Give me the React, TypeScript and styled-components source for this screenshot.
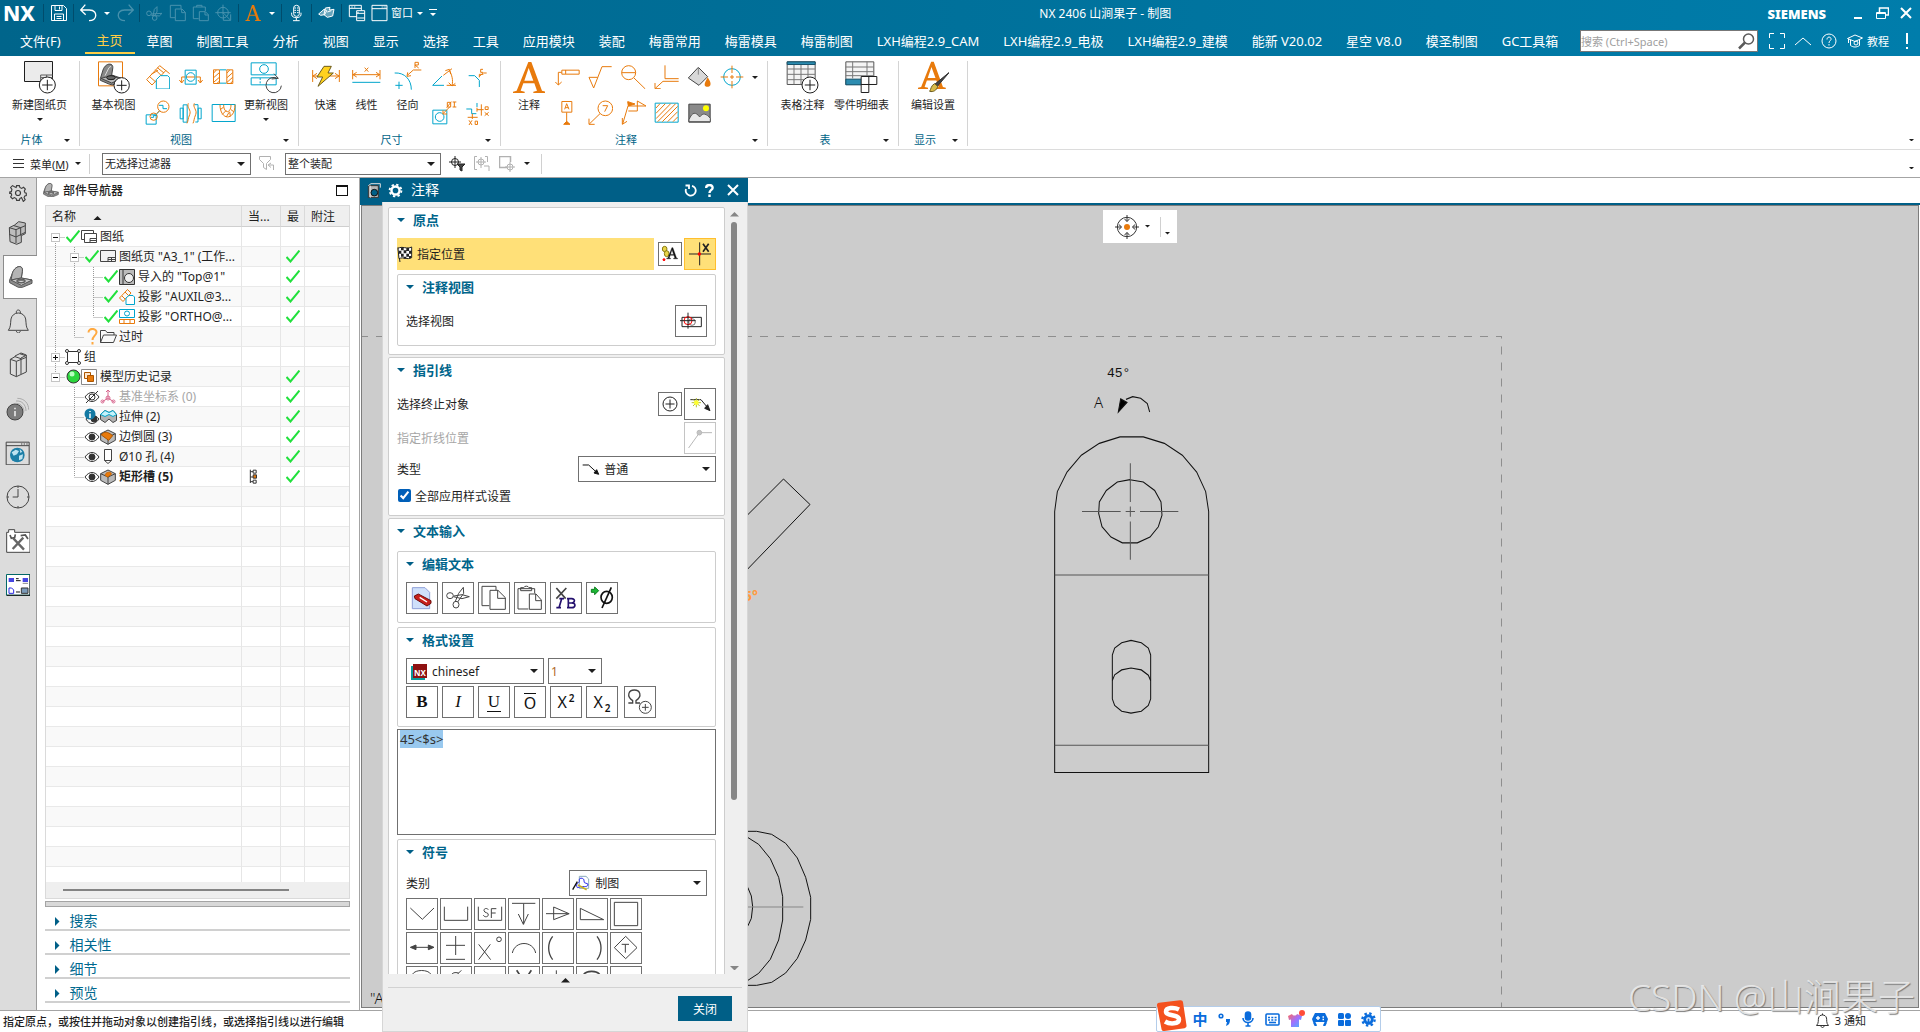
import React, { useEffect, useRef } from "react";
import styled, { createGlobalStyle } from "styled-components";

const O = "#e87a0c";
const C = "#00a5cc";
const BLUE = "#005f87";
const INK = "#1e1e1e";
const GREY = "#5a5a5a";

const Global = createGlobalStyle`
  *, *::before, *::after { box-sizing: border-box; }
  html, body { margin: 0; height: 100%; overflow: hidden; }
  body { font-family: "Noto Sans", "Noto Sans CJK SC", sans-serif; font-size: 12px; color: ${INK}; background: #fff; }
  button, select, input, textarea { font: inherit; color: inherit; margin: 0; }
  button { padding: 0; border: 0; background: none; }
  svg { display: block; flex: none; }
`;

/* ---------- drawing helpers ---------- */

type ZProps = { b: string; s?: string; f?: string; w?: number; children: React.ReactNode };
/* Icons are drawn on a grid three times finer than their size on screen. */
const Z = ({ b, s = INK, f = "none", w = 3, children }: ZProps) => {
  const [, , bw, bh] = b.split(" ").map(Number);
  return (
    <svg viewBox={b} width={bw / 3} height={bh / 3} fill={f} stroke={s} strokeWidth={w} aria-hidden="true">
      {children}
    </svg>
  );
};

const Tri = ({ color = INK, dir = "down", size = 7 }: { color?: string; dir?: "down" | "up" | "right"; size?: number }) => {
  const d = { down: "M0 0h8L4 4z", up: "M0 4h8L4 0z", right: "M0 0v8L4 4z" }[dir];
  const right = dir === "right";
  return (
    <svg viewBox={right ? "0 0 4 8" : "0 0 8 4"} width={right ? size / 2 : size} height={right ? size : size / 2} fill={color} aria-hidden="true">
      <path d={d} />
    </svg>
  );
};

const Part = ({ size }: { size: number }) => (
  <svg viewBox="0 0 72 66" width={size} height={(size * 66) / 72} stroke="#555" strokeWidth="3" aria-hidden="true">
    <path d="M2 42 10 22C14 8 26 0 34 2c6 2 7 8 6 14l-3 20 32 6v10L40 64H28L2 50z" fill="#8c8c8c" />
    <path d="M10 22C14 8 26 0 34 2c6 2 7 8 6 14l-3 20-31 6z" fill="#b4b4b4" />
    <path d="M6 42 37 36l32 6-32 16z" fill="#cacaca" />
    <ellipse cx="36" cy="45" rx="13" ry="6" fill="#777" />
    <path d="M28 48c4-4 12-4 17 0" fill="#ddd" stroke="none" />
  </svg>
);

const Plus = ({ x, y, r = 24 }: { x: number; y: number; r?: number }) => (
  <g stroke={INK} strokeWidth="3">
    <circle cx={x} cy={y} r={r} fill="#fff" />
    <path d={`M${x - r * 0.65} ${y}h${r * 1.3}M${x} ${y - r * 0.65}v${r * 1.3}`} />
  </g>
);

/* ---------- header ---------- */

const Shell = styled.div`height: 100vh; display: flex; flex-direction: column; position: relative; overflow: hidden;`;
const Header = styled.header`background: linear-gradient(90deg, #00658b, #007dab); color: #fff;`;
const TitleBar = styled.div`height: 26px; display: flex; align-items: center; padding-right: 2px;`;
const Logo = styled.span`width: 40px; padding-left: 3px; font: 800 21px/26px "Noto Sans", sans-serif;`;
const QuickSep = styled.span`width: 1px; height: 18px; margin: 0 3px; background: #004c6c;`;
const QuickButton = styled.button<{ $dim?: boolean }>`
  width: 23px; height: 24px; display: flex; align-items: center; justify-content: center; color: #fff; opacity: ${p => (p.$dim ? 0.28 : 1)};
`;
const QuickCaret = styled.button`width: 13px; height: 24px; display: flex; align-items: center; justify-content: center;`;
const QuickText = styled.span`font-size: 11px; line-height: 24px;`;
const Title = styled.h1`flex: 1; margin: 0; padding-left: 4px; text-align: center; font-size: 12px; font-weight: 400;`;
const Brand = styled.span`font: 900 13px/26px "Noto Sans", sans-serif; margin-right: 20px; padding-top: 2px;`;
const WinButton = styled.button`width: 24px; height: 26px; display: flex; align-items: center; justify-content: center;`;

const MenuBar = styled.nav`height: 30px; display: flex; align-items: stretch;`;
const Tab = styled.button<{ $active?: boolean; $file?: boolean }>`
  padding: ${p => (p.$file ? "0 24px 0 20px" : "0 12px")}; font-size: 13px; line-height: 28px; white-space: nowrap; position: relative;
  color: ${p => (p.$active ? "#ffcd45" : "#fff")};
  ${p => p.$active && `border-bottom: 2px solid #ffcd45; margin-bottom: 2px;`}
`;
const MenuRight = styled.div`margin-left: auto; display: flex; align-items: center;`;
const SearchBox = styled.label`
  width: 178px; height: 22px; margin-right: 6px; display: flex; align-items: center; background: #fff; border: 1px solid #777; padding-right: 2px;
  input { flex: 1; min-width: 0; border: 0; padding: 0; outline: 0; font-size: 11px; background: none; }
  input::placeholder { color: #a0a0a0; }
`;
const MenuIcon = styled.button`width: 26px; height: 26px; display: flex; align-items: center; justify-content: center; color: #fff;`;
const Tutorial = styled.button`display: flex; align-items: center; gap: 4px; padding: 0 5px; color: #fff; font-size: 11px;`;

const tabs = ["主页", "草图", "制图工具", "分析", "视图", "显示", "选择", "工具", "应用模块", "装配", "梅雷常用", "梅雷模具", "梅雷制图",
  "LXH编程2.9_CAM", "LXH编程2.9_电极", "LXH编程2.9_建模", "能新 V20.02", "星空 V8.0", "模圣制图", "GC工具箱"];

const TopHeader = () => (
  <Header>
    <TitleBar>
      <Logo>NX</Logo>
      <QuickSep />
      <QuickButton aria-label="保存">
        <svg viewBox="0 0 16 16" width="16" height="16" fill="none" stroke="#fff"><path d="M.5.5h12l3 3v12H.5zM4 .5v5h7v-5M8.500 1.500v3M3.500 15v-6h9v6M5.500 11.500h5M5.500 13.500h5" /></svg>
      </QuickButton>
      <QuickSep />
      <QuickButton aria-label="撤消"><Z b="0 12 54 54" s="#fff" w={4}><path d="M16 14 2 30l15 14M2 30h26c16 0 20 10 19 18s-8 14-20 14" /></Z></QuickButton>
      <QuickCaret aria-label="撤消列表"><Tri color="#fff" size={6} /></QuickCaret>
      <QuickButton $dim aria-label="重做"><Z b="110 12 54 54" s="#fff" w={4}><path d="m148 14 14 16-15 14m15-14h-26c-16 0-20 10-19 18s8 14 20 14" /></Z></QuickButton>
      <QuickSep />
      <QuickButton $dim aria-label="剪切"><Z b="200 12 50 54" s="#fff"><circle cx="209" cy="40" r="7" /><circle cx="226" cy="54" r="7" /><path d="M216 42l32-2-8 8-24-2M221 48l4-20 8-8v16l-8 12" /></Z></QuickButton>
      <QuickButton $dim aria-label="复制"><Z b="268 12 52 54" s="#fff"><path d="M286 53h-14V16h32v10M287 27h20l10 10v25h-30zM306 27v11h11" /></Z></QuickButton>
      <QuickButton $dim aria-label="粘贴"><Z b="336 12 52 54" s="#fff"><path d="M356 56h-16V21h36v12M350 21v-5h16v5M358 35h18l9 9v18h-27zM375 35v10h10" /></Z></QuickButton>
      <QuickButton $dim aria-label="移动"><Z b="408 12 52 54" s="#fff"><circle cx="432" cy="38" r="16" /><path d="M409 38h46M432 14v30M432 38l22 22M433 45v16h22V43" /></Z></QuickButton>
      <QuickSep />
      <QuickButton aria-label="注释"><Z b="495 12 50 54" s="none" f={O}><path fillRule="evenodd" d="M516 15h6l16 44 5 2v2h-18v-2l5-2-4-12h-17l-4 12 5 2v2h-14v-2l5-2zM510 44h15l-8-21z" /></Z></QuickButton>
      <QuickCaret aria-label="注释列表"><Tri color="#fff" size={6} /></QuickCaret>
      <QuickSep />
      <QuickButton aria-label="语音"><Z b="633 12 34 54" s="#fff"><rect x="641" y="16" width="17" height="33" rx="8" /><path d="M635 38v6c0 12 28 12 28 0v-6M649 53v9M639 62h20" /><path d="M643 24h5M643 31h5M643 38h5M651 24h5M651 31h5M651 38h5" /></Z></QuickButton>
      <QuickSep />
      <QuickButton aria-label="命令"><Z b="712 12 52 54" s="#fff"><path d="M714 42l16-14 8 4-6 12-12 2zM734 24l14-2-2 8 14-2-4 20-16 4-10-8zM740 36l12-4" fill="#ffffff66" /></Z></QuickButton>
      <QuickSep />
      <QuickButton aria-label="切换窗口"><Z b="798 12 54 54" s="#fff"><path d="M824 50h-22V16h36v16M802 25h36M824 32h24v30h-24zM824 40h24M826 54h22" /><path d="M808 21h4M816 21h4M826 37h4" /></Z></QuickButton>
      <QuickButton aria-label="窗口"><Z b="868 12 52 54" s="#fff"><path d="M871 16h45v46h-45zM871 26h45" /><path d="M900 21h3M906 21h3M911 21h3" /></Z></QuickButton>
      <QuickText>窗口</QuickText>
      <QuickCaret aria-label="窗口列表"><Tri color="#fff" size={6} /></QuickCaret>
      <QuickCaret aria-label="自定义"><svg viewBox="0 0 8 8" width="8" height="8" fill="#fff"><path d="M0 0h8v1H0zM1 4h6L4 7z" /></svg></QuickCaret>
      <Title>NX 2406 山涧果子 - 制图</Title>
      <Brand>SIEMENS</Brand>
      <WinButton aria-label="最小化"><svg width="8" height="14"><path d="M0 11h8v2H0z" fill="#fff" /></svg></WinButton>
      <WinButton aria-label="还原"><svg width="13" height="13" fill="none" stroke="#fff"><path d="M3.500 5V1h9v7H10" strokeWidth="1.500" /><path d="M.5 5.500h9v6h-9zM.5 6.500h9" /></svg></WinButton>
      <WinButton aria-label="关闭"><svg width="12" height="12" stroke="#fff" strokeWidth="2"><path d="m1 1 10 10M11 1 1 11" /></svg></WinButton>
    </TitleBar>
    <MenuBar>
      <Tab $file>文件(F)</Tab>
      {tabs.map((t, i) => <Tab key={t} $active={i === 0}>{t}</Tab>)}
      <MenuRight>
        <SearchBox>
          <input aria-label="搜索" placeholder="搜索 (Ctrl+Space)" />
          <svg width="17" height="17" fill="none" stroke={GREY}><circle cx="10.500" cy="6" r="5" strokeWidth="1.500" /><path d="m7 9.500-6 6" strokeWidth="2.500" /></svg>
        </SearchBox>
        <MenuIcon aria-label="全屏"><svg width="16" height="16" fill="none" stroke="#fff"><path d="M5 .5H.5V5M11 .5h4.500V5M5 15.500H.5V11M11 15.500h4.500V11" /></svg></MenuIcon>
        <MenuIcon aria-label="最小化功能区"><svg width="16" height="9" fill="none" stroke="#fff"><path d="m0 8 8-7 8 7" /></svg></MenuIcon>
        <MenuIcon aria-label="帮助"><svg width="16" height="16" fill="none" stroke="#fff"><circle cx="8" cy="8" r="7" /><path d="M6 6.500C6 3 10.500 3.500 10 6.500c-.2 1-2 1.500-2 3.500M8 11v1.500" /></svg></MenuIcon>
        <Tutorial>
          <svg width="16" height="14" fill="none" stroke="#fff"><path d="M.5 4.500 8 1l7.500 3L8 7.500zM3.500 6v5.500c3 2 6 2 9 0V6M1.500 5v4" /><circle cx="9" cy="9" r="2" /></svg>
          <span>教程</span>
        </Tutorial>
        <MenuIcon aria-label="提示"><svg width="2" height="16" fill="#fff"><path d="M0 0h2v11H0zM0 14h2v2H0z" /></svg></MenuIcon>
      </MenuRight>
    </MenuBar>
  </Header>
);

/* ---------- ribbon ---------- */

const Ribbon = styled.div`height: 94px; display: flex; align-items: flex-start; padding-top: 5px; border-bottom: 1px solid #dcdcdc; position: relative;`;
const Group = styled.section`height: 85px; display: flex; flex-direction: column; border-right: 1px solid #d4d4d4; padding: 0 6px;`;
const Tools = styled.div`flex: 1; display: flex; align-items: flex-start;`;
const Big = styled.button<{ $w: number }>`
  width: ${p => p.$w}px; display: flex; flex-direction: column; align-items: center; font-size: 11px; line-height: 16px; white-space: nowrap;
  > span:first-child { height: 36px; }
  > svg { margin-top: 5px; }
`;
const Smalls = styled.div`display: grid; grid-auto-flow: column; grid-template-rows: 32px 40px; grid-auto-columns: 33px;`;
const Small = styled.button`display: flex; align-items: center; justify-content: center;`;
const GroupFoot = styled.div`display: flex; align-items: center; font-size: 11px; line-height: 12px; color: #006487; > span { flex: 1; text-align: center; padding-right: 4px; } > button { width: 12px; height: 12px; display: flex; align-items: center; justify-content: center; }`;
const Spacer = styled.span<{ $w: number }>`width: ${p => p.$w}px;`;
const Collapse = styled.button`margin-left: auto; align-self: flex-end; width: 18px; height: 18px; display: flex; align-items: center; justify-content: center;`;
const QuickRow = styled.button`width: 12px; height: 32px; display: flex; align-items: center; justify-content: center;`;

const BigTool = ({ label, w, caret, children }: { label: string; w: number; caret?: boolean; children: React.ReactNode }) => (
  <Big $w={w}><span>{children}</span><span>{label}</span>{caret && <Tri size={6} />}</Big>
);
const Foot = ({ name }: { name: string }) => (
  <GroupFoot><span>{name}</span><button aria-label={`${name}选项`}><Tri size={6} /></button></GroupFoot>
);

const LetterA = "M46 0h9l32 86 10 3v4H61v-4l11-3-8-22H31l-8 22 12 3v4H0v-4l11-3z M34 56h27L47 18z";

const RibbonBar = () => (
  <Ribbon>
    <Group>
      <Tools>
        <BigTool label="新建图纸页" w={67} caret>
          <Z b="0 0 96 99">
            <path d="M1.500 1.500h84v60h-84z" fill="#ebebeb" /><path d="M50 60V42h36M50 50h36M68 42v18" stroke={GREY} /><Plus x={70} y={72} />
          </Z>
        </BigTool>
      </Tools>
      <Foot name="片体" />
    </Group>
    <Group>
      <Tools>
        <BigTool label="基本视图" w={55}>
          <Z b="51 182 96 99">
            <path d="M52.500 184.500h72v72h-72z" stroke={O} />
            <path d="M58 235l8-26c4-12 14-20 24-17 6 3 6 8 5 14l-3 18 30 10v8l-28 12-8-2-28-12z" fill="#888" stroke="#444" /><path d="M60 234l32-8 28 10-28 12z" fill="#bbb" stroke="#444" /><ellipse cx="90" cy="232" rx="13" ry="6" fill="#666" /><path d="M72 226l12-24 6-4" stroke="#ddd" />
            <Plus x={122} y={255} r={23} />
          </Z>
        </BigTool>
        <Smalls>
          <Small aria-label="投影视图"><Z b="192 194 72 74" s={O}><path d="m194 238 39-42 30 24M194 238l16 16 42-44M202 228l18 16M220 208l22 22M208 222l20-12M226 202l20 16" /><path d="M223 266v-28l12-12h22l6 6v34z" stroke={C} fill="#fff" /></Z></Small>
          <Small aria-label="局部放大图"><Z b="190 298 76 76" s={O}><path d="M193.500 342.500h30v28h-30z" stroke={C} /><circle cx="245" cy="318" r="17" /><circle cx="216" cy="348" r="11" /><path d="m225 340 9-10M232 314h12v10h12M208 350h8v-6h10" stroke={C} /><path d="m226 338 8-8" /></Z></Small>
          <Small aria-label="剖视图"><Z b="292 205 72 50" s={O}><path d="M310.500 208.500h33v42h-33z" stroke={C} /><circle cx="327" cy="229" r="13" stroke={C} /><path d="M315 229h24M300 246v-17h10M343 229h13v17M293 238l7 9 7-9M349 238l7 9 7-9" /></Z></Small>
          <Small aria-label="断开视图"><Z b="292 300 70 68" s={C}><path d="M295.500 318.500h9v32h-9zM304.500 308.500h12v52h-12zM349.500 318.500h9v32h-9zM338 308h11v52h-8" /><path d="M320 304c-6 12 10 20 4 34s-4 18-8 26M338 304c-6 12 10 20 4 34s-4 18-8 26" stroke={O} /></Z></Small>
          <Small aria-label="剖切线"><Z b="396 206 62 46" s={O}><path d="M397.500 208.500h18v41h-18zM437.500 208.500h18v41h-18zM398 218l8 -9M398 232l17-15M398 246l17-15M408 249l8-7M438 218l8-9M438 232l17-15M438 246l17-15M448 249l8-7" /><path d="M416 248.500h20M416 208.500h20" stroke={C} /></Z></Small>
          <Small aria-label="局部剖视图"><Z b="388 306 76 60" s={C}><path d="M391.500 310.500h69v51h-69z" /><path d="M415 311c0 48 45 50 45 0M426 311c0 28 22 28 22 0M416 326l10-8M422 340l12-12M434 348l8-14M446 346l-2-14M456 332l-8-6" stroke={O} /></Z></Small>
        </Smalls>
        <BigTool label="更新视图" w={52} caret>
          <Z b="508 182 96 99">
            <path d="M511.500 187.500h75v36h-75zM511.500 232.500h75v21h-75z" stroke={C} fill="#fff" /><circle cx="550" cy="206" r="13" stroke={C} /><path d="M538.500 233v21" stroke={C} strokeDasharray="6 4" />
            <path d="M590 234a23 23 0 1 0 12 22" stroke="#444" fill="none" /><path d="M580 220l13 14-20 2" stroke="#444" />
          </Z>
        </BigTool>
      </Tools>
      <Foot name="视图" />
    </Group>
    <Group>
      <Tools>
        <BigTool label="快速" w={41}><Z b="696 190 84 91"><path d="M698 217v36M778 217v36M698 235h80M711 227l-12 8 12 8M765 227l12 8-12 8" stroke={O} /><path d="M732 206h22l-10 20h16l-46 40 14-28h-17z" fill="#ffd21e" stroke="#6b5a1c" /></Z></BigTool>
        <BigTool label="线性" w={41}><Z b="818 190 86 91"><path d="M820 217v28M902 217v28M820 231h82M832 224l-11 7 11 7M890 224l11 7-11 7M856 210l11 12M867 210l-11 12" stroke={O} /><path d="M819 254h84" stroke={C} /></Z></BigTool>
        <BigTool label="径向" w={41}><Z b="934 190 84 91" s={O}><path d="M936 226c30-2 50 20 50 50M949 252v22M938 263h22" stroke={C} /><path d="M1016 217h-24l-18 16M985 234l-12 2 2-12M997 211v-17h10v8h-10l11 9" /></Z></BigTool>
        <Smalls>
          <Small aria-label="角度"><Z b="1060 198 76 66" s={O}><path d="M1090 228l-28 28h34" stroke={C} /><path d="M1094 226l26-20M1112 210c8 16 12 30 8 48M1100 212l12-4 4 14M1110 248l10 10 10-8M1104 256h28" /></Z></Small>
          <Small aria-label="孔"><Z b="1058 302 76 70" s={O}><path d="M1060.500 329.500h42v41h-42z" stroke={C} /><circle cx="1081" cy="350" r="13" stroke={C} /><path d="m1091 340 20-20M1091 330v11h12M1104 306h10v14h-10zM1102 322l14-18M1120 305h11M1120 320h11M1125 305v15" /></Z></Small>
          <Small aria-label="倒斜角"><Z b="1160 204 58 60" s={O}><path d="M1162 230h18l14 14v20" stroke={C} /><path d="M1194 232l12-10h10M1205 211h-7v9h7M1206 226h-12v9" /></Z></Small>
          <Small aria-label="坐标"><Z b="1158 300 76 74" s={O}><path d="M1162 324h16v14h14M1194 318v-12" stroke={C} /><path d="M1166 349h30M1180 338v16M1194 320v12M1194 326h20M1207 310v34M1170 358l9 14M1179 358l-9 14M1188.500 360.500h7v10h-7zM1218.500 317.500h9v8h-9zM1217 334l12 10M1229 334l-12 10" /></Z></Small>
        </Smalls>
      </Tools>
      <Foot name="尺寸" />
    </Group>
    <Group>
      <Tools>
        <BigTool label="注释" w={44}><Z b="0 -3 98 99" s="none" f={O}><path fillRule="evenodd" d={LetterA} /></Z></BigTool>
        <Smalls>
          <Small aria-label="特征控制框"><Z b="161 34 76 58" s={O}><path d="M181.500 43.500h52v12h-52zM193 43v12M181 50h-10v38M162 79l9 9 10-9" /></Z></Small>
          <Small aria-label="基准特征"><Z b="161 130 76 76" s={O}><path d="M181.500 134.500h30v32h-30zM196 167v36" /><path d="M187 203l9-9 10 9z" fill={O} /><path d="M190 158l6-17 7 17M192 153h9" /></Z></Small>
          <Small aria-label="表面粗糙度"><Z b="259 26 74 72" s={O}><path d="M262 63h26M262 63l14 32 25-64h29" /></Z></Small>
          <Small aria-label="符号标注"><Z b="259 130 76 76" s={O}><circle cx="311" cy="155" r="22" /><path d="m295 171-32 31M262 186v17h17M303 147h15l-9 18" /></Z></Small>
          <Small aria-label="目标点"><Z b="359 26 74 74" s={O}><circle cx="382" cy="49" r="21" /><path d="M361 49h42M398 65l34 33" /></Z></Small>
          <Small aria-label="焊接符号"><Z b="357 130 78 76" s={O}><path d="M362 202l16-54h54l-26-15v30h-27M361 184v19l14-9M380 148v-13" /><path d="M377 135l22 7-20 6z" fill={O} /></Z></Small>
          <Small aria-label="相交符号"><Z b="457 26 76 74" s={O}><path d="M490 27v40h41M531 75h-47l-23 21M460 80v17h17" /></Z></Small>
          <Small aria-label="剖面线"><Z b="457 136 76 64" s={O}><path d="M460.500 139.500h69v57h-69z" stroke={C} /><path d="M463 154l12-13M463 170l28-29M463 186l44-45M468 195l54-54M482 195l46-46M498 195l30-30M514 195l14-14" /></Z></Small>
          <Small aria-label="区域填充"><Z b="556 30 76 66"><path d="m560 66 30-32 28 28-26 26z" fill="#d8d8d8" stroke="#444" /><path d="M590 34v22" stroke="#888" /><path d="M618 64c8 12 10 18 8 24-4 6-14 6-17 0-1-6 3-12 9-24z" fill={O} stroke="none" /></Z></Small>
          <Small aria-label="图像"><Z b="560 138 70 62"><path d="M562.500 141.500h64v54h-64z" fill="#8a8a8a" stroke="#444" /><path d="M563 188c10-24 20-24 32-8 10-14 20-10 32 4v10h-64z" fill="#e8e8e8" stroke="#555" /><circle cx="614" cy="154" r="9" fill="#ff0" stroke="none" /></Z></Small>
          <Small aria-label="中心标记"><Z b="655 26 76 74" s={C}><circle cx="691" cy="62" r="25" /><path d="M657 62h22M685 62h12M703 62h22M691 28v22M691 56v12M691 74v22" stroke={O} /></Z></Small>
          <Spacer $w={1} />
        </Smalls>
        <QuickRow aria-label="更多符号"><Tri size={6} /></QuickRow>
      </Tools>
      <Foot name="注释" />
    </Group>
    <Group>
      <Tools>
        <BigTool label="表格注释" w={57}><Z b="860 14 98 99"><path d="M863.500 16.500h84v68h-84z" fill="#f4f4f4" stroke="#555" /><path d="M863 38h84M863 54h84M863 70h84M884 24v60M905 24v60M926 24v60" stroke="#777" /><path d="M863.500 16.500h84v8h-84z" fill="#2c8cb0" stroke="#17526b" /><Plus x={932} y={86} /></Z></BigTool>
        <BigTool label="零件明细表" w={61}><Z b="1031 14 98 99"><path d="M1033.500 16.500h84v68h-84z" fill="#f4f4f4" stroke="#555" /><path d="M1033 32h84M1033 46h84M1033 58h84M1054 16v50M1097 16v50" stroke="#777" /><path d="M1033.500 68.500h60v17h-60z" fill="#2c8cb0" stroke="#17526b" /><path d="M1079.500 60.500h47v24h-47zM1079.500 84.500h23v24h-23zM1102.500 60v24" fill="#fff" /></Z></BigTool>
      </Tools>
      <Foot name="表" />
    </Group>
    <Group>
      <Tools>
        <BigTool label="编辑设置" w={56}><Z b="-3 -2 98 99"><path transform="scale(.86 .88)" fillRule="evenodd" d={LetterA} fill={O} stroke="none" /><path d="M94 32 58 74l-8-6z" fill="#444" stroke="#333" /><path d="M50 66l9 8c-2 12-14 18-24 15 4-6 4-18 15-23z" fill="#d8bb4a" stroke="#6b5a1c" /></Z></BigTool>
      </Tools>
      <Foot name="显示" />
    </Group>
    <Collapse aria-label="功能区选项"><Tri size={5} /></Collapse>
  </Ribbon>
);

/* ---------- selection bar ---------- */

const SelBar = styled.div`height: 28px; display: flex; align-items: center; border-bottom: 1px solid #a4a4a4; font-size: 11px; padding-left: 13px;`;
const MenuButton = styled.button`display: flex; align-items: center; gap: 6px; width: 76px; font-size: 11px;`;
const BarSep = styled.span<{ $m: string }>`width: 1px; height: 20px; flex: none; background: #d0d0d0; margin: ${p => p.$m};`;
const BarIcon = styled.button<{ $dim?: boolean }>`width: 25px; height: 24px; display: flex; align-items: center; justify-content: center; opacity: ${p => (p.$dim ? 0.35 : 1)};`;

const SelectFrame = styled.span<{ $w: number; $h: number; $fs: number; $color: string }>`
  width: ${p => p.$w}px; height: ${p => p.$h}px; display: flex; align-items: center; border: 1px solid #707070; background: #fff; padding: 0 5px 0 2px; gap: 4px; font-size: ${p => p.$fs}px; flex: none;
  select { flex: 1; min-width: 0; height: 100%; border: 0; background: none; appearance: none; outline: 0; padding: 0; font-size: inherit; color: ${p => p.$color}; }
`;
const Select = ({ w, h = 26, fs = 12, label, value, icon, color = INK }: { w: number; h?: number; fs?: number; label: string; value: string; icon?: React.ReactNode; color?: string }) => (
  <SelectFrame $w={w} $h={h} $fs={fs} $color={color}>{icon}<select aria-label={label}><option>{value}</option></select><Tri size={8} /></SelectFrame>
);

const SelectionBar = () => (
  <SelBar>
    <MenuButton><svg width="11" height="9" stroke="#333"><path d="M0 .5h11M0 4.500h11M0 8.500h11" /></svg><span>菜单(<u>M</u>)</span><Tri size={6} /></MenuButton>
    <BarSep $m="0 12px 0 0" />
    <Select w={149} h={22} fs={11} label="类型过滤器" value="无选择过滤器" />
    <Spacer $w={4} />
    <BarIcon $dim aria-label="过滤器"><svg width="17" height="15" fill="none" stroke="#222"><path d="M.5.5h11v3l-4 4v6l-3-2v-4l-4-4zM10 9h4.500v5M12 7l-3 2 3 2.500" /></svg></BarIcon>
    <Spacer $w={5} />
    <Select w={156} h={22} fs={11} label="选择范围" value="整个装配" />
    <Spacer $w={4} />
    <BarIcon aria-label="捕捉"><svg width="17" height="16" fill="none" stroke="#222"><circle cx="6" cy="6" r="3.500" /><path d="M6 0v12M0 6h12" /><path d="M8 8h8l-3 3v4l-2-1v-3z" fill="#444" /></svg></BarIcon>
    <BarIcon $dim aria-label="重置"><svg width="17" height="16" fill="none" stroke="#222"><path d="M3 .5H.5v13H3M11 .5h2.500V6" /><circle cx="7" cy="6" r="3" /><path d="M7 1v11M2 6h10M10 10h5v5" /></svg></BarIcon>
    <BarIcon $dim aria-label="框选"><svg width="17" height="16" fill="none" stroke="#222"><path d="M8 11.500H.5V.5h11V6" strokeWidth="1.500" /><circle cx="11" cy="11" r="3" /><path d="M11 6v10M6 11h10" /></svg></BarIcon>
    <Spacer $w={4} />
    <Tri size={6} />
    <BarSep $m="0 0 0 11px" />
    <Collapse aria-label="选择条选项"><Tri size={5} /></Collapse>
  </SelBar>
);

/* ---------- resource rail ---------- */

const Work = styled.main`flex: 1; min-height: 0; display: flex;`;
const Rail = styled.nav`width: 37px; background: #dcdcdc; border-right: 1px solid #9c9c9c; padding-top: 1px; flex: none;`;
const RailTab = styled.button<{ $active?: boolean }>`
  width: ${p => (p.$active ? 34 : 36)}px; height: 44px; margin-left: ${p => (p.$active ? 3 : 0)}px; display: flex; align-items: center; justify-content: center;
  ${p => p.$active && "background: #fff; border: 1px solid #8c8c8c; border-right: 0;"}
  &:first-child { height: 28px; margin-bottom: 4px; }
`;

const RailNav = () => (
  <Rail aria-label="资源条">
    <RailTab aria-label="设置"><svg viewBox="-9 -9 18 18" width="18" height="18" fill="none" stroke="#3c3c3c" strokeWidth="1.200"><circle r="2.500" /><path d="M-1.500-8h3l.5 2 2 1 2-1.200 2 2-1.200 2 .8 2 1.400.4v2.600l-1.600.4-.8 1.800 1.200 2.200-2 2L3.800 5 2 6l-.5 2h-3L-2 6l-2-1-2 1.200-2-2 1.200-2-.8-2L-9 .4v-1.600L-7.200-1.600-6.600-4-8-6l2-2 2.200 1.200L-2-6z" transform="scale(.92)" /></svg></RailTab>
    <RailTab aria-label="装配导航器"><Z b="30 152 58 70" s="#444"><path d="M34 172l16-8 12-10 20 4v32l-12 6v20l-14 6-20-8z" fill="#bdbdbd" /><path d="M34 172l20 6v40M54 178l28-12M34 192l20 8 28-14M48 166l20 6v24" /></Z></RailTab>
    <RailTab $active aria-label="部件导航器"><Part size={24} /></RailTab>
    <RailTab aria-label="通知"><Z b="24 416 68 74" s="#444"><path d="M28 480c8-10 6-20 8-34 2-10 10-18 22-18s20 8 22 18c2 14 0 24 8 34zM52 428c-2-12 14-12 12 0M52 482c2 8 10 8 12 0" /></Z></RailTab>
    <RailTab aria-label="重用库"><Z b="34 546 54 76" s="#444"><path d="M38 568l18 6v46l-18-8zM56 574l30-12v44l-30 14M38 568l14-8 18 6M52 560v-2l14-7 18 6-14 7v48M66 551l4-2 16 6v8" /></Z></RailTab>
    <RailTab aria-label="HD3D"><Z b="22 680 72 74" s="#aaa"><circle cx="49" cy="725" r="24" fill="#7c7c7c" stroke="#444" /><path d="M49 712v5M49 722v16" stroke="#fff" strokeWidth="4" /><path d="M52 692c18-2 30 12 30 30M56 684c22 0 34 16 34 34M50 699c14-1 24 8 26 24" /></Z></RailTab>
    <RailTab aria-label="浏览器"><Z b="22 812 76 74" s="#444"><path d="M25.500 815.500h69v68h-69zM25 826h69M70 821h4M78 821h4M86 821h4" /><circle cx="59" cy="854" r="22" fill="#1d7ea6" stroke="none" /><path d="M42 846l12-8 10 4-6 10-10 4zM64 856l12-4-2 14-10 4zM66 836l8 8-6 4z" fill="#bfe3f0" stroke="none" /></Z></RailTab>
    <RailTab aria-label="历史记录"><Z b="0 0 72 72" s="#444"><circle cx="36" cy="36" r="33" /><path d="M36 12v24H20M36 3v6M36 63v6M3 36h6M63 36h6" /></Z></RailTab>
    <RailTab aria-label="工具"><Z b="0 0 74 74" s="#444"><path d="M2 10h6V2h18v8h46v60H2z" fill="#fff" /><path d="m20 60 32-34M22 28l32 34" stroke="#666" strokeWidth="7" /><path d="M12 18l4 10 10-2 2-10M44 20l14-2 8 12" stroke="#555" strokeWidth="5" /></Z></RailTab>
    <RailTab aria-label="图形窗口"><Z b="0 0 74 66" s="#066"><path d="M1.500 1.500h71v62h-71z" fill="#fff" /><path d="M72 2v62H2" stroke="#111" /><path d="M8 12h16v12H8zM50 12h16v12H50z" fill="#4646e0" stroke="none" /><path d="M30 14h8M30 20h14M30 54h12" stroke="#111" /><path d="M50 28h16" stroke="#888" /><path d="M9 42h8l6 6v10H9z" stroke="#2a2ae0" /><path d="M46 42h20v16H46z" fill="#7a9ab8" stroke="#333" /></Z></RailTab>
  </Rail>
);

/* ---------- part navigator ---------- */

const Navigator = styled.section`width: 322px; flex: none; display: flex; flex-direction: column; padding: 0 9px 7px 8px; background: #fff;`;
const NavHead = styled.header`height: 27px; padding-bottom: 3px; display: flex; align-items: center; gap: 4px; margin-left: -2px; font-size: 12px; font-weight: 500; h2 { margin: 0; font: inherit; flex: 1; }`;
const Box = styled.button`width: 12px; height: 11px; border: 1px solid #111; border-top-width: 2px; margin-right: 2px;`;
const TreeFrame = styled.div`flex: 1; min-height: 0; overflow: hidden; border: 1px solid #dadada; border-bottom: 0;`;
const Tree = styled.table`
  width: 100%; table-layout: fixed; border-collapse: separate; border-spacing: 0; font-size: 12px; line-height: 18px;
  th { height: 21px; padding: 2px 0 0 6px; text-align: left; font-weight: 400; background: #efefef; border-right: 1px solid #dadada; border-bottom: 1px solid #cfcfcf; white-space: nowrap; overflow: hidden; }
  th > span { margin-right: 17px; } th svg { display: inline; vertical-align: 1px; }
  td { height: 20px; padding: 0; border-right: 1px solid #e6e6e6; border-bottom: 1px solid #e9e9e9; }
  td:last-child, th:last-child { border-right: 0; }
  tr:nth-child(even) td { background: #f9f9f9; }
`;
const Name = styled.div<{ $dim?: boolean; $bold?: boolean }>`
  display: flex; align-items: center; height: 19px; overflow: hidden; color: ${p => (p.$dim ? "#a6a6a6" : INK)}; font-weight: ${p => (p.$bold ? 700 : 400)};
  > span:last-child { margin-left: 3px; white-space: nowrap; }
`;
const Slot = styled.span`width: 16px; height: 19px; display: flex; align-items: center; justify-content: center; flex: none;`;
const Center = styled.div`display: flex; justify-content: center;`;
const Mark = styled.div`padding-left: 7px;`;
const Scroller = styled.div`height: 17px; background: #efefef; border: 1px solid #dadada; border-top: 0; padding: 7px 60px 0 17px; &::before { content: ""; display: block; height: 2px; background: #848484; }`;
const Splitter = styled.div`height: 6px; margin: 2px 0 0; background: #d8d8d8; border: 1px solid #a4a4a4;`;
const Fold = styled.button`height: 24px; padding: 6px 0 0 10px; display: flex; align-items: center; gap: 10px; width: 100%; border-bottom: 2px solid #d0d0d0; color: #00698f; font-size: 14px; line-height: 16px; text-align: left;`;

const Check = () => <svg width="14" height="13" fill="none" stroke="#21e03c" strokeWidth="2"><path d="M.5 7 4.500 11.500 13.500.5" /></svg>;
const Eye = ({ off }: { off?: boolean }) => (
  <svg width="16" height="14" fill="none" stroke="#333"><path d="M1 7c4-6 10-6 14 0-4 6-10 6-14 0z" /><circle cx="8" cy="7" r="3" fill={off ? "none" : "#333"} />{off && <path d="M2 13 14 1" />}</svg>
);
const Cube = ({ face }: { face: React.ReactNode }) => (
  <svg viewBox="0 0 48 48" width="16" height="16" stroke="#444" strokeWidth="3"><path d="M2 14 24 3l22 11v20L24 46 2 34z" fill="#bbb" /><path d="M2 14l22 10v22M24 24l22-10" fill="none" />{face}</svg>
);
const icons: Record<string, React.ReactNode> = {
  check: <Check />,
  eye: <Eye />,
  off: <Eye off />,
  q: <svg width="11" height="17" fill="none" stroke="#ffa940" strokeWidth="2"><path d="M1.500 4.500c0-5 8.500-4.500 8 0-.3 3-4 3.500-4 7.500M5.500 14v2.500" /></svg>,
  ball: <svg width="15" height="15"><circle cx="7.500" cy="7.500" r="6.500" fill="#2bd63c" stroke="#333" /><circle cx="6" cy="5" r="2.500" fill="#b8ffc0" /></svg>,
  info: <svg width="16" height="17" fill="none" stroke="#333"><path d="M2 11c3-5 9-5 13 0-4 6-10 6-13 0z" /><circle cx="10" cy="11" r="3" fill="#333" /><circle cx="6" cy="6" r="5.500" fill="#1379a3" stroke="none" /><path d="M6 3v1M6 5.500V10" stroke="#fff" strokeWidth="1.500" /></svg>,
  sheets: <svg width="16" height="13" fill="none" stroke="#444"><path d="M3 9.500H.5v-9h12V3M3.500 3.500h12v9h-12zM9 12V8.500h6M9 10.500h6" /></svg>,
  sheet: <svg width="16" height="13" fill="#f2f2f2" stroke="#444"><path d="M.5.5h15v11H.5zM8 11.500v-4h7.500M8 9.500h7M11.500 7.500v4" /></svg>,
  top: <svg width="16" height="16" stroke="#333"><path d="M.5.5h15v15H.5z" fill="#bbb" /><path d="M4 1v14" /><circle cx="10" cy="9" r="4.500" fill="#eee" /></svg>,
  aux: <svg width="16" height="16" fill="none" stroke={O}><path d="m.5 9 8-8.500L12 4 4 12.500zM3 7l3 3M6 3l4 4" /><path d="M7 15.500V9l3-2.500h4l1.500 1.500v7.500z" stroke={C} fill="#fff" /></svg>,
  ortho: <svg width="16" height="15" fill="none" stroke={C}><path d="M.5.5h15v8H.5z" /><circle cx="8" cy="4.500" r="2.500" /><path d="M.5 10.500h15v4H.5zM5 10.500v4M11 10.500v4" stroke={O} /></svg>,
  folder: <svg width="17" height="13" fill="none" stroke="#444"><path d="M.5 12.500v-12h5l1.500 2h7v2.500M.5 12.500l3-7.500h13l-3 7.500z" /></svg>,
  group: <svg width="16" height="16" fill="none" stroke="#333"><path d="M2 2.500h12M2 13.500h12M2.500 2v12M13.500 2v12" /><path d="M.5 2a1 1 0 1 1 3 0 1 1 0 1 1-3 0zM12.500 2a1 1 0 1 1 3 0 1 1 0 1 1-3 0zM.5 14a1 1 0 1 1 3 0 1 1 0 1 1-3 0zM12.500 14a1 1 0 1 1 3 0 1 1 0 1 1-3 0z" fill="#fff" /></svg>,
  history: <svg width="16" height="16" fill="#fff" stroke="#888"><path d="M.5.5h15v15H.5z" /><path d="M3.500 3.500h6v6h-6z" stroke="#a50" fill="#ffe6cc" /><path d="M6.500 6.500h6v6h-6z" fill={O} stroke="#a50" /></svg>,
  csys: <svg width="16" height="16" fill="none" stroke="#d8688f"><path d="M8 1v8l-6 4M8 9l6 4M6 3l2-2 2 2" /><circle cx="8" cy="9" r="2" /><circle cx="2.500" cy="12.500" r="1.500" /><circle cx="13.500" cy="12.500" r="1.500" /></svg>,
  extrude: <svg width="17" height="15" stroke="#444"><path d="M.5 5.500 5 1.500l4 2 4-2 3.500 4v6L13 13.500 9 10l-4 3.500-4.500-3z" fill="#b4b4b4" /><path d="m.5 5.500 4.500-4 4 2 4-2 3.500 4L13 7.500l-4-2-4 2z" fill="#c6f2fb" stroke={C} /></svg>,
  blend: <Cube face={<path d="M4 18C10 8 20 8 30 14l8 6-12 14z" fill={O} stroke="#a50" />} />,
  hole: <svg width="9" height="15" fill="#fff" stroke="#444"><path d="M.5.5h7v11l-3.500 3-3.500-3zM.5 11.500h7" /></svg>,
  slot: <Cube face={<path d="M16 16c4-8 16-8 18-2 0 6-8 4-10 10-6-1-8-4-8-8z" fill={O} stroke="#c60" />} />,
};

type Row = { v: string[]; box?: "+" | "-"; ic: string[]; t: string; ok?: boolean; dim?: boolean; bold?: boolean; cur?: boolean };
/* v: guide line per level (f = through, t = ends here, b = starts here, n = none) */
const rows: Row[] = [
  { v: ["b"], box: "-", ic: ["check", "sheets"], t: "图纸" },
  { v: ["f", "f"], box: "-", ic: ["check", "sheet"], t: "图纸页 \"A3_1\" (工作...", ok: true },
  { v: ["f", "f", "f"], ic: ["check", "top"], t: "导入的 \"Top@1\"", ok: true },
  { v: ["f", "f", "f"], ic: ["check", "aux"], t: "投影 \"AUXIL@3...", ok: true },
  { v: ["f", "f", "t"], ic: ["check", "ortho"], t: "投影 \"ORTHO@...", ok: true },
  { v: ["f", "t"], ic: ["q", "folder"], t: "过时" },
  { v: ["f"], box: "+", ic: ["group"], t: "组" },
  { v: ["t"], box: "-", ic: ["ball", "history"], t: "模型历史记录", ok: true },
  { v: ["n", "f"], ic: ["off", "csys"], t: "基准坐标系 (0)", ok: true, dim: true },
  { v: ["n", "f"], ic: ["info", "extrude"], t: "拉伸 (2)", ok: true },
  { v: ["n", "f"], ic: ["eye", "blend"], t: "边倒圆 (3)", ok: true },
  { v: ["n", "f"], ic: ["eye", "hole"], t: "Ø10 孔 (4)", ok: true },
  { v: ["n", "t"], ic: ["eye", "slot"], t: "矩形槽 (5)", ok: true, bold: true, cur: true },
];

const Guides = ({ v, box }: { v: string[]; box?: string }) => {
  const last = 9.5 + 19 * (v.length - 1);
  return (
    <svg width={v.length * 19} height="20" fill="none" stroke="#999" aria-hidden="true">
      <g strokeDasharray="1 1">
        {v.map((k, i) => k !== "n" && <path key={i} d={`M${9.5 + 19 * i} ${k === "b" ? 10 : 0}V${k === "t" ? 10 : 20}`} />)}
        <path d={`M${last} 10.5h9`} />
      </g>
      {box && <><rect x={last - 4} y="6.500" width="8" height="8" fill="#fff" stroke="#c4c4c4" /><path d={`M${last - 2.5} 10.5h5${box === "+" ? "M" + last + " 8v5" : ""}`} stroke="#111" /></>}
    </svg>
  );
};

const PartNavigator = () => (
  <Navigator>
    <NavHead><Part size={16} /><h2>部件导航器</h2><Box aria-label="最大化" /></NavHead>
    <TreeFrame>
      <Tree>
        <colgroup><col /><col width="39" /><col width="24" /><col width="44" /></colgroup>
        <thead><tr><th><span>名称</span><Tri dir="up" size={9} /></th><th>当...</th><th>最</th><th>附注</th></tr></thead>
        <tbody>
          {rows.map(r => (
            <tr key={r.t}>
              <td><Name $dim={r.dim} $bold={r.bold}><Guides v={r.v} box={r.box} />{r.ic.map(i => <Slot key={i}>{icons[i]}</Slot>)}<span>{r.t}</span></Name></td>
              <td>{r.cur && <Mark><Z b="748 898 26 46" s="#333"><path d="M752 900v40M752 906h8M752 922h8M752 936h8" /><path d="M760.500 901.500h9v9h-9zM760.500 931.500h9v9h-9z" fill="#fff" /><path d="M760.500 915.500h10v10h-10z" fill={O} /></Z></Mark>}</td>
              <td>{r.ok && <Center><Check /></Center>}</td>
              <td />
            </tr>
          ))}
          {Array.from({ length: 60 }, (_, i) => <tr key={i} aria-hidden="true"><td /><td /><td /><td /></tr>)}
        </tbody>
      </Tree>
    </TreeFrame>
    <Scroller />
    <Splitter />
    {["搜索", "相关性", "细节", "预览"].map(t => <Fold key={t}><Tri dir="right" size={9} color={BLUE} /><span>{t}</span></Fold>)}
  </Navigator>
);

/* ---------- graphics window ---------- */

const Graphics = styled.section`flex: 1; min-width: 0; position: relative; display: flex; flex-direction: column; border-left: 1px solid #a4a4a4;`;
const DocTabs = styled.div`height: 27px; flex: none; display: flex; border-bottom: 2px solid ${BLUE};`;
const DocTab = styled.button`width: 220px; background: ${BLUE}; padding-left: 7px; display: flex; align-items: center;`;
const Canvas = styled.div`flex: 1; min-height: 0; position: relative; overflow: hidden; margin: 0 1px 2px; border: 1px solid #7c7c7c; background: #ccc; > svg { position: absolute; left: -1px; top: -1px; }`;
const ViewBar = styled.div`position: absolute; top: 4px; left: 50%; transform: translateX(-50%); width: 74px; height: 33px; background: #fff; display: flex; align-items: center; padding: 0 6px 0 12px; button { display: flex; align-items: center; gap: 6px; }`;
const ViewMore = styled.span`padding-top: 14px;`;

const Sheet = () => (
  <svg width="1560" height="810" fill="none" stroke="#111" aria-label="工程图">
    <g transform="translate(-361 -205)">
      <path d="M360 336.500h1142" stroke="#8e8e8e" strokeDasharray="8 8" />
      <path d="M1501.500 336.500v680" stroke="#8e8e8e" strokeDasharray="8 8" strokeDashoffset="6" />
      <path d="M740 522.500 783.500 479l26.500 25.500-70 72.500" />
      <g transform="translate(1030 190) scale(.33333 .3827)" strokeWidth="3">
        <path d="M74 840 82 788 111 737 154 693 208 662 270 645h70l63 17 54 31 43 44 27 51 9 52v682H74z" />
        <path d="M74 1006h462M74 1451h462" stroke="#555" />
        <path d="M300 757l40 6 34 22 19 30 3 35-11 30-25 27-38 15h-45l-34-15-27-27-10-35 2-30 21-30 33-22z" />
        <path d="M156 840h116M287 840h28M330 840h115M301 714v101M301 827v27M301 866v100" stroke="#555" />
        <path d="M247 1215l7-18 21-14 28-6 31 6 21 14 7 18v115l-7 17-21 15-31 5-28-5-21-15-7-17z" />
        <path d="M247 1282l7-15 21-13 28-5 31 5 21 14 7 14" />
        <path d="M265 580l7-34 19 9z" fill="#000" />
        <path d="M288 547l20-7 24 4 20 14 7 22" />
      </g>
      <g transform="translate(360 790) scale(.33333)" strokeWidth="3">
        <path d="M1150 124h40l45 9 42 27 35 44 25 58 15 60v66l-15 62-25 55-35 44-42 28-45 9h-40" />
        <path d="M1150 134l46 29 35 43 25 56 12 58v70l-12 60-25 58-35 42-46 30M1150 270l14 24 10 24 4 32-4 35-10 22-14 20" />
        <path d="M1150 351h180" stroke="#888" />
      </g>
      <g stroke="none" fontFamily='"Noto Sans", sans-serif' fill="#111">
        <text x="1107" y="377" fontSize="13" fontFamily='"Liberation Mono", monospace'>45°</text>
        <text x="1094" y="408" fontSize="15" fontWeight="300">A</text>
        <text x="370" y="1004" fontSize="15" fontWeight="300">"A</text>
        <text x="744" y="601" fontSize="14" fontWeight="700" fill="#ff9a40">5°</text>
      </g>
    </g>
  </svg>
);

/* ---------- annotation dialog ---------- */

const DialogBox = styled.section`position: absolute; z-index: 2; left: 22px; top: 0; bottom: -22px; width: 366px; display: flex; flex-direction: column; background: #efefef; border: 1px solid #d6d6d6; border-top: 0;`;
const DialogHead = styled.header`height: 24px; margin: 0 -1px; flex: none; display: flex; align-items: center; background: ${BLUE}; color: #fff; padding: 0 2px 0 6px; h2 { flex: 1; margin: 0 0 0 8px; font-size: 14px; font-weight: 400; line-height: 24px; } button { width: 19px; display: flex; justify-content: center; } button:last-child { width: 27px; }`;
const DialogBody = styled.div`flex: 1; min-height: 0; display: flex; padding: 5px 0 0 5px;`;
const Sections = styled.div`width: 337px; overflow: hidden; display: flex; flex-direction: column; gap: 2px; > * { flex: none; }`;
const VScroll = styled.div`width: 18px; display: flex; flex-direction: column; align-items: center; padding: 5px 0 4px; gap: 5px;`;
const Thumb = styled.div`width: 6px; flex: 578 1 0; border-radius: 3px; background: #868686;`;
const Rest = styled.div`flex: 155 1 0;`;
const Sec = styled.section<{ $nested?: boolean }>`
  background: #fff; border: 1px solid #cdcdcd; border-radius: 2px; padding: 0 8px 8px; display: flex; flex-direction: column; gap: 2px; ${p => p.$nested && "margin-top: 2px;"}
`;
const SecHead = styled.button`height: 22px; margin-bottom: 6px; display: flex; align-items: center; gap: 8px; color: #00658b; font-size: 13px; font-weight: 700; text-align: left; > svg { margin-top: 1px; }`;
const Line = styled.div<{ $h?: number; $dim?: boolean }>`min-height: ${p => p.$h ?? 32}px; display: flex; align-items: center; gap: 2px; color: ${p => (p.$dim ? "#a6a6a6" : INK)}; > span:first-child { flex: 1; }`;
const Pick = styled.div`flex: 1; height: 32px; margin-right: 2px; background: #ffe078; display: flex; align-items: center; gap: 4px;`;
const Key = styled.button<{ $small?: boolean; $on?: boolean; $dim?: boolean }>`
  width: ${p => (p.$small ? 24 : 32)}px; height: ${p => (p.$small ? 24 : 32)}px; flex: none; display: flex; align-items: center; justify-content: center;
  background: ${p => (p.$on ? "#ffe078" : "#fff")}; border: 1px solid ${p => (p.$on ? "#ffbf2e" : p.$dim ? "#c4c4c4" : "#707070")}; color: #111;
`;
const Keys = styled.div`display: flex; gap: 4px; > [data-last] { margin-left: 2px; }`;
const Glyph = styled.span<{ $serif?: boolean; $b?: boolean; $i?: boolean }>`
  font-family: ${p => (p.$serif ? '"Liberation Serif", serif' : '"Noto Sans", sans-serif')}; font-size: ${p => (p.$serif ? 17 : 16)}px; line-height: 18px;
  font-weight: ${p => (p.$b ? 700 : 400)}; font-style: ${p => (p.$i ? "italic" : "normal")};
  sup, sub { font-size: 10px; line-height: 0; font-weight: 600; margin-left: 2px; }
`;
const Under = styled(Glyph)`border-bottom: 1px solid #111; padding: 0 1px;`;
const Over = styled(Glyph)`border-top: 1px solid #111;`;
const TextArea = styled.textarea`height: 106px; width: 100%; border: 1px solid #707070; border-radius: 0; resize: none; outline: 0; padding: 1px 2px; font-size: 13px; line-height: 17px; color: #333; background: #fff; &::selection { background: #99c9ef; color: #333; }`;
const CheckLine = styled.label`height: 23px; display: flex; align-items: center; gap: 4px; font-size: 12px; input { width: 13px; height: 13px; margin: 0 0 0 1px; accent-color: #005fb8; }`;
const Grid7 = styled.div`display: grid; grid-template-columns: repeat(7, 32px); gap: 2px;`;
const Expand = styled.button`height: 13px; display: flex; align-items: center; justify-content: center; flex: none;`;
const DialogFoot = styled.footer`height: 44px; flex: none; margin: 0 5px; border-top: 1px solid #d2d2d2; display: flex; justify-content: flex-end; padding: 8px 10px 0 0; button { width: 54px; height: 25px; background: ${BLUE}; color: #fff; font-size: 12px; }`;
const NxBadge = styled.span`width: 14px; height: 14px; margin: 0 1px 0 4px; background: #8e1111; box-shadow: -2px 2px 0 #0a9a9a; color: #fff; font: 700 8px/17px "Noto Sans", sans-serif; text-align: center; i { font-style: normal; }`;

const Section = ({ title, nested, children }: { title: string; nested?: boolean; children: React.ReactNode }) => (
  <Sec $nested={nested}><SecHead aria-expanded="true"><Tri color={BLUE} size={8} />{title}</SecHead>{children}</Sec>
);

const symbols: [string, React.ReactNode][] = [
  ["埋头孔", <path d="M151 354 187 388 222 354" />],
  ["沉头孔", <path d="M253 350v41h70v-41" />],
  ["锪平", <path d="M355 350v41h70v-41M385 359c-4-6-14-4-13 3 1 8 14 4 13 13-2 8-14 6-15 0M409 356h-15v28M394 369h13" />],
  ["深度", <path d="M456 340h70M491 341v62M475 372l15 31 15-31" />],
  ["锥度", <path d="M558 371h70M581 351v38l46-18z" />],
  ["斜度", <path d="M661 355v34h70z" />],
  ["方形", <path d="M763 337h70v70h-70z" />],
  ["之间", <g><path d="M160 472h54" /><path d="M151 472l17-7v14zM222 472l-17-7v14z" fill="#444" /></g>],
  ["加减", <path d="M258 466h57M287 438v57M258 508h57" />],
  ["度", <g><path d="M356 463l36 46M391 463l-35 46" /><circle cx="417" cy="448" r="7" /></g>],
  ["弧长", <path d="M457 489c8-38 62-38 70 0" />],
  ["左括号", <path d="M578 439c-16 20-16 50 0 70" strokeWidth="4" />],
  ["右括号", <path d="M711 439c16 20 16 50 0 70" strokeWidth="4" />],
  ["统计公差", <path d="M797 439l34 34-34 33-34-33zM785 463h22M796 463v25" />],
  ["圆", <path d="M158 552c8-14 46-14 54 0" />],
  ["直径", <path d="M304 541l-14 14M272 556c6-8 12-10 24-7" />],
  ["空白", <path d="" />],
  ["分叉", <path d="M470 541l12 18M514 541l-12 18" strokeWidth="5" />],
  ["竖线", <path d="M589 541v20" />],
  ["半圆", <path d="M670 556c6-16 44-16 50 0" strokeWidth="5" />],
  ["框", <path d="" />],
];

const LeaderIcon = () => <Z b="664 880 58 38" s="#111"><path d="M669 886h18l26 24" /><path d="M717 914l-14-4 8-10z" fill="#111" /></Z>;

const Dialog = () => {
  const text = useRef<HTMLTextAreaElement>(null);
  useEffect(() => { text.current?.focus({ preventScroll: true }); text.current?.select(); }, []);
  return (
    <DialogBox role="dialog" aria-label="注释">
      <DialogHead>
        <svg viewBox="-8 -8 16 16" width="15" height="15" fill="none" stroke="#fff"><circle r="4.300" strokeWidth="2.600" /><circle r="6.300" strokeWidth="2" strokeDasharray="2.470 2.470" /></svg>
        <h2>注释</h2>
        <button aria-label="重置"><svg width="13" height="13" fill="none" stroke="#fff" strokeWidth="1.800"><path d="M8 1.800A5 5 0 1 1 2 5M1.500 1.500h3.500v3.500" /></svg></button>
        <button aria-label="帮助"><svg width="9" height="13" fill="none" stroke="#fff" strokeWidth="2.400"><path d="M1.200 4c0-4 6.600-4 6.400 0C7.500 6 4.500 6 4.500 9M4.500 10.500V13" /></svg></button>
        <button aria-label="关闭"><svg width="12" height="12" stroke="#fff" strokeWidth="2"><path d="m1 1 10 10M11 1 1 11" /></svg></button>
      </DialogHead>
      <DialogBody>
        <Sections>
          <Section title="原点">
            <Line>
              <Pick>
                <Z b="110 226 48 50" s="#222"><path d="M113 230l6 45" /><path d="M113 233c14-8 26 4 41-4v32c-14 8-24-4-38 3z" fill="#fff" /><path d="M122 230h8v9h-8zM138 232h8v9h-8zM130 239h8v9h-8zM146 240h8v9h-8zM116 240h7v9h-7zM122 249h8v9h-8zM138 249h8v9h-8zM130 258h8v6h-8zM146 256h7v6h-7z" fill="#222" stroke="none" /></Z>
                <span>指定位置</span>
              </Pick>
              <Key $small aria-label="原点工具"><Z b="903 226 52 52" s="#8a7a10"><ellipse cx="914" cy="238" rx="7" ry="8" fill="#e8d44a" /><ellipse cx="920" cy="252" rx="7" ry="9" fill="#e8d44a" /><circle cx="912" cy="270" r="3" fill="red" stroke="red" /><path transform="translate(920 234) scale(.34 .36)" fillRule="evenodd" d={LetterA} fill="#111" stroke="#111" /></Z></Key>
              <Key $on aria-label="点构造器"><Z b="984 214 72 76" s="#222"><path d="M987 253h66M1019 218v69" /><circle cx="1018" cy="253" r="5" fill="red" stroke="none" /><path d="M1029 222l17 24M1046 222l-17 24" strokeWidth="5" /></Z></Key>
            </Line>
            <Section nested title="注释视图">
              <Line><span>选择视图</span><Key aria-label="选择视图"><Z b="958 426 72 54" s="#222"><path d="M967 442h58v28h-58z" /><circle cx="997" cy="456" r="10" stroke="#777" /><circle cx="985" cy="452" r="12" stroke="red" /><path d="M961 452h47M985 428v48" /></Z></Key></Line>
            </Section>
          </Section>
          <Section title="指引线">
            <Line><span>选择终止对象</span>
              <Key $small aria-label="添加"><svg width="16" height="16" fill="none" stroke="#222"><circle cx="8" cy="8" r="7" /><path d="M8 3.500v9M3.500 8h9" /></svg></Key>
              <Key aria-label="选择对象"><Z b="990 662 66 62" s="#222"><path d="M994 679h32l20 24" /><path d="M1053 712l-16-7 9-11z" fill="#222" /><path d="M1012 674v28M998 688h28M1002 678l20 20M1022 678l-20 20" stroke="#b3bf3a" /><circle cx="1012" cy="688" r="7" fill="#ffff30" stroke="none" /></Z></Key>
            </Line>
            <Line $dim><span>指定折线位置</span><Key $dim disabled aria-label="指定折线位置"><Z b="984 774 72 62" s="#b8b8b8"><path d="M985 835l33-46M1018 788h38" /><circle cx="1018" cy="788" r="7" fill="#c4c4c4" /></Z></Key></Line>
            <Line $h={26}><span>类型</span><Select w={138} label="类型" value="普通" icon={<LeaderIcon />} /></Line>
            <CheckLine><input type="checkbox" defaultChecked />全部应用样式设置</CheckLine>
          </Section>
          <Section title="文本输入">
            <Section nested title="编辑文本">
              <Keys>
                <Key aria-label="清除"><Z b="158 228 64 72"><path d="M162 233h38l14 14v49h-52z" fill="#cfe0fb" stroke="#8f9fd8" /><path d="M168 258l12-6 38 20v8l-12 8-36-22z" fill="#c8201c" stroke="#6a0d0a" /><path d="M184 262l22 14" stroke="#fff" strokeWidth="4" /></Z></Key>
                <Key aria-label="剪切"><Z b="258 230 72 70" s="#444"><ellipse cx="270" cy="259" rx="10" ry="9" /><ellipse cx="288" cy="286" rx="9" ry="10" /><path d="M280 262l26 6 22-6-22-6-24 4M286 276l10-24 14-18 1 18-18 26" /></Z></Key>
                <Key aria-label="复制"><Z b="364 226 76 76" s="#444"><path d="M389 288h-22v-58h42v11M391 242h24l22 22v35h-46zM414 242v24h23" /></Z></Key>
                <Key aria-label="粘贴"><Z b="472 226 76 76" s="#444"><path d="M506 298h-31v-61h50v14M483 243v-9h9c2-6 14-6 16 0h8v9zM509 253h20l16 18v28h-36zM528 253v20h17" /></Z></Key>
                <Key aria-label="删除文本属性"><Z b="584 230 66 70" s="#444"><path d="M588 236l28 32M618 236l-30 32" strokeWidth="5" /><g stroke="#24106e" strokeWidth="5"><path d="M597 268h14M588 295h14M604 268l-8 27" /><path d="M624 268v27M620 268h14c12 0 10 12 0 13h-8 8c14 0 12 14 0 14h-14" /></g></Z></Key>
                <Key aria-label="选择下一个符号"><Z b="688 230 74 70"><path d="M692 240h10v-7l12 11-12 12v-7h-10z" fill="#1db836" stroke="#0c7c1e" /><ellipse cx="738" cy="264" rx="17" ry="18" strokeWidth="5" stroke="#111" /><path d="M752 234l-28 62" strokeWidth="5" stroke="#111" /></Z></Key>
              </Keys>
            </Section>
            <Section nested title="格式设置">
              <Keys>
                <Select w={138} label="字体" value="chinesef" icon={<NxBadge><i>NX</i></NxBadge>} />
                <Select w={54} label="字号" value=" 1" color="#b06a2a" />
              </Keys>
              <Keys>
                <Key aria-label="粗体"><Glyph $serif $b>B</Glyph></Key>
                <Key aria-label="斜体"><Glyph $serif $i>I</Glyph></Key>
                <Key aria-label="下划线"><Under $serif>U</Under></Key>
                <Key aria-label="上划线"><Over>O</Over></Key>
                <Key aria-label="上标"><Glyph>X<sup>2</sup></Glyph></Key>
                <Key aria-label="下标"><Glyph>X<sub>2</sub></Glyph></Key>
                <Key data-last aria-label="插入符号"><Z b="802 538 76 76" s="#444"><path d="M806 580h13v-7c-20-14-12-32 5-32s25 18 5 32v7h12" strokeWidth="4" /><circle cx="857" cy="593" r="18" fill="#fff" /><path d="M847 593h20M857 583v20" /></Z></Key>
              </Keys>
            </Section>
            <TextArea ref={text} aria-label="文本" defaultValue="45<$s>" spellCheck={false} />
            <Section nested title="符号">
              <Line $h={26}><span>类别</span><Select w={138} label="类别" value="制图" icon={<Z b="640 254 58 50" s="#2c2ce8"><path d="M662 258h20l8 8v28h-28z" fill="#fff" stroke="#8ab" /><path d="M656 292c-8-14 8-12 6-22s16-8 14 2 14 4 12 12-16 2-32 8z" /><path d="M658 284l26 14" stroke="#c8b020" strokeWidth="5" /><path d="M642 298l14-24" stroke="#111" strokeWidth="4" /></Z>} /></Line>
              <Grid7>
                {symbols.map(([name, d], i) => (
                  <Key key={name} aria-label={name}><Z b={`${141 + 102 * (i % 7)} ${327 + 102 * Math.floor(i / 7)} 90 90`} s="#444">{d}</Z></Key>
                ))}
              </Grid7>
            </Section>
          </Section>
        </Sections>
        <VScroll><Tri dir="up" size={9} color="#868686" /><Thumb /><Rest /><Tri size={9} color="#868686" /></VScroll>
      </DialogBody>
      <Expand aria-label="收起"><Tri dir="up" size={9} /></Expand>
      <DialogFoot><button>关闭</button></DialogFoot>
    </DialogBox>
  );
};

/* ---------- status bar and overlays ---------- */

const Status = styled.footer`height: 22px; flex: none; display: flex; align-items: center; justify-content: space-between; border-top: 1px solid #a4a4a4; padding: 0 54px 2px 3px; font-size: 11px; background: #fff; > span { font-weight: 500; }`;
const Notice = styled.button`display: flex; align-items: center; gap: 6px; font-size: 11px; line-height: 12px;`;
const Ime = styled.div`position: absolute; z-index: 3; left: 1156px; bottom: 0; width: 225px; height: 26px; display: flex; align-items: center; padding-left: 31px; background: #fff; border: 1px solid #b4cdea; border-radius: 2px; > button { width: 24px; display: flex; justify-content: center; color: #0a6cdc; font-size: 15px; font-weight: 700; line-height: 24px; }`;
const Sogou = styled.span`position: absolute; left: -1px; bottom: -1px;`;
const Watermark = styled.div`position: absolute; z-index: 3; right: 5px; bottom: 17px; font-size: 37px; line-height: 36px; font-weight: 300; color: rgba(236, 236, 236, 0.9); text-shadow: 1px 1px 1px #7c7c7c; pointer-events: none; white-space: nowrap;`;

export default function App() {
  return (
    <Shell>
      <Global />
      <TopHeader />
      <RibbonBar />
      <SelectionBar />
      <Work>
        <RailNav />
        <PartNavigator />
        <Graphics>
          <DocTabs><DocTab aria-label="图纸"><Z b="20 38 44 46" s="#333"><path d="M24 46h30v36H24z" fill="#b8b8b8" /><path d="M30 46v36M24 46l8-6h28v12" stroke="#ddd" /><circle cx="42" cy="67" r="10" fill={BLUE} stroke="#111" /></Z></DocTab></DocTabs>
          <Canvas>
            <Sheet />
            <ViewBar>
              <button aria-label="捕捉点"><Z b="0 0 72 72" s="#333"><circle cx="36" cy="36" r="29" /><path d="M36 0v18M36 54v18M0 36h18M54 36h18M29 12l7 8 7-8M29 60l7-8 7 8M12 29l8 7-8 7M60 29l-8 7 8 7" /><circle cx="36" cy="36" r="9" fill={O} stroke="none" /></Z><Tri size={5} /></button>
              <BarSep $m="0 4px 0 10px" />
              <button aria-label="更多"><ViewMore><Tri size={5} /></ViewMore></button>
            </ViewBar>
          </Canvas>
          <Dialog />
        </Graphics>
      </Work>
      <Status>
        <span>指定原点，或按住并拖动对象以创建指引线，或选择指引线以进行编辑</span>
        <Notice><svg width="13" height="16" fill="none" stroke="#333"><path d="M.5 12.500C3 10 2 7 2.500 5c.5-2 2-3 4-3s3.500 1 4 3c.5 2-.5 5 2 7.500zM5 13c0 2 3 2 3 0M6.500 2V.5" /></svg>3 通知</Notice>
      </Status>
      <Ime>
        <Sogou><svg width="32" height="32"><path d="M1 5.500C.8 4 1.500 3 3 2.700L24 .3c1.800-.2 2.800.5 3 2l3.500 23c.2 1.600-.6 2.600-2 2.900L8.500 31c-1.600.3-2.700-.4-3-2z" fill="#f4511e" /><path d="M23 9.500c-5-2.500-13-2-13 2 0 5 13 2.500 13 8 0 4.500-9 5-14 2" fill="none" stroke="#fff" strokeWidth="4.500" /></svg></Sogou>
        <button>中</button>
        <button aria-label="标点"><svg width="13" height="13" fill="#0a6cdc"><circle cx="3" cy="3" r="1.800" fill="none" stroke="#0a6cdc" strokeWidth="1.600" /><path d="M8 6h4c0 4-1 6-4 7l1-4H8z" /></svg></button>
        <button aria-label="语音"><svg width="12" height="16" fill="none" stroke="#0a6cdc" strokeWidth="1.600"><rect x="3.500" y="1" width="5" height="8" rx="2.500" fill="#0a6cdc" /><path d="M1 7c0 6 10 6 10 0M6 12v3M3.500 15h5" /></svg></button>
        <button aria-label="键盘"><svg width="15" height="13" fill="none" stroke="#0a6cdc" strokeWidth="1.600"><rect x="1" y="1" width="13" height="11" rx="1" /><path d="M3 4.500h9M3 7h9" strokeDasharray="2 1.300" /><path d="M4 9.500h7" /></svg></button>
        <button aria-label="皮肤"><svg width="18" height="18"><defs><linearGradient id="sk" x1="0" y1="0" x2="1" y2="1"><stop offset="0" stopColor="#ff6a5e" /><stop offset=".5" stopColor="#a070ff" /><stop offset="1" stopColor="#40b8ff" /></linearGradient></defs><path d="M1 6l4-2c1 2 4 2 5 0l5 2-1 4-2-.5V17H4V9.500L2 10z" fill="url(#sk)" /><circle cx="15" cy="3" r="3" fill="#ff4d3a" /></svg></button>
        <button aria-label="游戏"><svg width="16" height="14" fill="#0a6cdc"><path d="M3 1h10l3 6-1 3H1L0 7z" /><path d="M2 10l2 4M14 10l-2 4" stroke="#0a6cdc" strokeWidth="2.500" /><path d="M4 6h4M6 4v4M10.500 5h1.500M10.500 7.500h1.500" stroke="#fff" strokeWidth="1.400" /></svg></button>
        <button aria-label="工具箱"><svg width="13" height="13" fill="#0a6cdc"><rect width="6" height="6" rx="1.500" /><circle cx="10" cy="3" r="3" /><rect y="7" width="6" height="6" rx="1" /><rect x="7" y="7" width="6" height="6" rx="1" /></svg></button>
        <button aria-label="设置"><svg width="15" height="15" viewBox="-8 -8 16 16" fill="none" stroke="#0a6cdc"><circle r="4" strokeWidth="3" /><circle r="6.500" strokeWidth="2.500" strokeDasharray="2.550 2.550" /><path d="M0-1v6" strokeWidth="2" /></svg></button>
      </Ime>
      <Watermark>CSDN @山涧果子</Watermark>
    </Shell>
  );
}
